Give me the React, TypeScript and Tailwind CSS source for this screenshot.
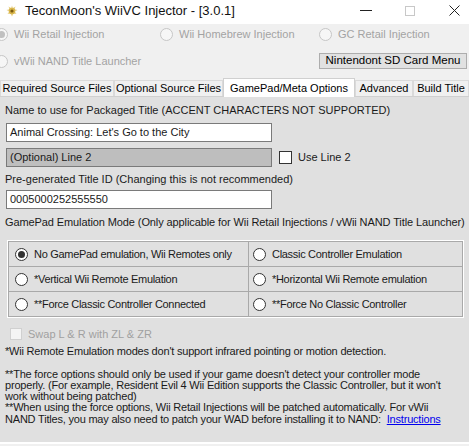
import React from "react";

const Radio = ({ checked = false, disabled = false }: { checked?: boolean; disabled?: boolean }) => (
  <span
    className={`inline-flex h-[13px] w-[13px] shrink-0 items-center justify-center rounded-full border ${
      disabled ? "border-[#c6c6c6] bg-[#f6f6f6]" : "border-[#333333] bg-white"
    }`}
  >
    {checked && (
      <span className={`h-[7px] w-[7px] rounded-full ${disabled ? "bg-[#c0c0c0]" : "bg-[#333333]"}`} />
    )}
  </span>
);

const TopRadio = ({ label, checked, className = "" }: { label: string; checked?: boolean; className?: string }) => (
  <div className={`flex items-center gap-[6px] whitespace-nowrap text-[11px] text-[#a3a3a3] ${className}`}>
    <Radio checked={checked} disabled />
    <span>{label}</span>
  </div>
);

const Tab = ({ label, active, width }: { label: string; active?: boolean; width: string }) => (
  <div
    className={`flex items-center justify-center whitespace-nowrap border border-b-0 text-[11px] ${width} ${
      active
        ? "z-10 -mb-px h-[19px] border-[#d0d0d0] bg-white"
        : "h-[16px] border-[#dadada] bg-[#f0f0f0]"
    }`}
  >
    {label}
  </div>
);

const Cell = ({ label, checked, pad }: { label: string; checked?: boolean; pad: string }) => (
  <div
    className={`flex h-[24px] items-center gap-[6px] whitespace-nowrap bg-[#e0e0e0] text-[11px] tracking-[-0.3px] text-[#1a1a1a] ${pad}`}
  >
    <Radio checked={checked} />
    <span>{label}</span>
  </div>
);

const TextBox = ({ value, gray }: { value: string; gray?: boolean }) => (
  <div
    className={`flex h-[19px] w-[266px] items-center border border-[#7a7a7a] pl-[3px] text-[11px] ${
      gray ? "bg-[#bebebe]" : "bg-white"
    }`}
  >
    {value}
  </div>
);

const App = () => {
  return (
    <div
      className="h-[446px] w-[469px] overflow-hidden bg-[#f0f0f0] text-black"
      style={{ fontFamily: '"Liberation Sans", Arial, sans-serif' }}
    >
      {/* title bar */}
      <div className="flex h-[24px] items-center bg-white pb-[3px]">
        <svg width="12" height="12" viewBox="0 0 12 12" className="ml-[6px] mr-[7px]">
          <circle cx="6" cy="6" r="3.2" fill="#c9a233" />
          <path d="M6 0.5 L6.8 3 L9.5 1.5 L8.5 4.3 L11.5 5 L8.8 6.5 L10.5 9 L7.5 8.5 L6 11.5 L4.5 8.5 L1.5 9 L3.2 6.5 L0.5 5 L3.5 4.3 L2.5 1.5 L5.2 3 Z" fill="#e0bf55" opacity="0.7" />
          <circle cx="6" cy="6" r="1.6" fill="#7a5a10" />
        </svg>
        <span className="text-[13px] text-[#111111]">TeconMoon's WiiVC Injector - [3.0.1]</span>
        <div className="ml-auto mr-[9px] flex items-center">
          <span className="block h-px w-[12px] bg-[#222222]" />
          <span className="ml-[33px] block h-[10px] w-[10px] border border-[#c8c8c8]" />
          <svg width="11" height="11" viewBox="0 0 11 11" className="ml-[34px]">
            <path d="M0.5 0.5 L10.5 10.5 M10.5 0.5 L0.5 10.5" stroke="#222222" strokeWidth="1" />
          </svg>
        </div>
      </div>

      {/* injection type */}
      <div className="flex flex-col pt-[3px]">
        <div className="flex h-[14px] items-center">
          <TopRadio label="Wii Retail Injection" checked className="-ml-[5px] w-[165px]" />
          <TopRadio label="Wii Homebrew Injection" className="w-[159px]" />
          <TopRadio label="GC Retail Injection" />
        </div>
        <div className="mt-[12px] flex h-[16px] items-center">
          <TopRadio label="vWii NAND Title Launcher" className="-ml-[5px]" />
          <button className="ml-auto mr-[2px] h-[16px] w-[148px] border border-[#adadad] bg-[#e1e1e1] text-[11.5px] leading-none">
            Nintendont SD Card Menu
          </button>
        </div>
      </div>

      {/* tabs */}
      <div className="mt-[9px] flex items-end">
        <Tab label="Required Source Files" width="w-[114px]" />
        <Tab label="Optional Source Files" width="w-[109px]" />
        <Tab label="GamePad/Meta Options" active width="w-[132px]" />
        <Tab label="Advanced" width="w-[58px]" />
        <Tab label="Build Title" width="w-[56px]" />
      </div>

      {/* panel */}
      <div className="h-[348px] border-t border-[#d0d0d0] border-b-2 border-b-white bg-[#e0e0e0] px-[5px] text-[11px] text-[#1a1a1a]">
        <div className="mt-[7px] whitespace-nowrap leading-[12px]">
          Name to use for Packaged Title (ACCENT CHARACTERS NOT SUPPORTED)
        </div>
        <div className="mt-[7px] pl-px">
          <TextBox value="Animal Crossing: Let's Go to the City" />
        </div>
        <div className="mt-[6px] flex items-center pl-px">
          <TextBox value="(Optional) Line 2" gray />
          <span className="ml-[7px] h-[13px] w-[13px] border border-[#333333] bg-white" />
          <span className="ml-[6px]">Use Line 2</span>
        </div>
        <div className="mt-[6px] whitespace-nowrap leading-[12px]">
          Pre-generated Title ID (Changing this is not recommended)
        </div>
        <div className="mt-[5px] pl-px">
          <TextBox value="0005000252555550" />
        </div>
        <div className="mt-[7px] whitespace-nowrap leading-[12px] tracking-[-0.1px]">
          GamePad Emulation Mode (Only applicable for Wii Retail Injections / vWii NAND Title Launcher)
        </div>
        <div className="ml-[2px] mt-[12px] w-[457px] border border-white">
          <div className="grid grid-cols-[239px_1fr] gap-px border border-[#a9a9a9] bg-[#a9a9a9]">
            <Cell label="No GamePad emulation, Wii Remotes only" checked pad="pl-[6px]" />
            <Cell label="Classic Controller Emulation" pad="pl-[4px]" />
            <Cell label="*Vertical Wii Remote Emulation" pad="pl-[6px]" />
            <Cell label="*Horizontal Wii Remote emulation" pad="pl-[4px]" />
            <Cell label="**Force Classic Controller Connected" pad="pl-[6px]" />
            <Cell label="**Force No Classic Controller" pad="pl-[4px]" />
          </div>
        </div>
        <div className="mt-[9px] flex h-[14px] items-center pl-[5px] text-[#a0a0a0]">
          <span className="h-[12px] w-[12px] border border-[#d0d0d0] bg-[#f4f4f4]" />
          <span className="ml-[6px]">Swap L &amp; R with ZL &amp; ZR</span>
        </div>
        <div className="mt-[5px] whitespace-nowrap text-[11px] leading-[11.3px] tracking-[-0.2px]">
          <p>*Wii Remote Emulation modes don't support infrared pointing or motion detection.</p>
          <p className="mt-[11.3px]">
            **The force options should only be used if your game doesn't detect your controller mode
            <br />
            properly. (For example, Resident Evil 4 Wii Edition supports the Classic Controller, but it won't
            <br />
            work without being patched)
          </p>
          <p>
            **When using the force options, Wii Retail Injections will be patched automatically. For vWii
            <br />
            NAND Titles, you may also need to patch your WAD before installing it to NAND:{" "}
            <span className="ml-[3px] text-[#0000ee] underline">Instructions</span>
          </p>
        </div>
      </div>
    </div>
  );
};

export default App;
